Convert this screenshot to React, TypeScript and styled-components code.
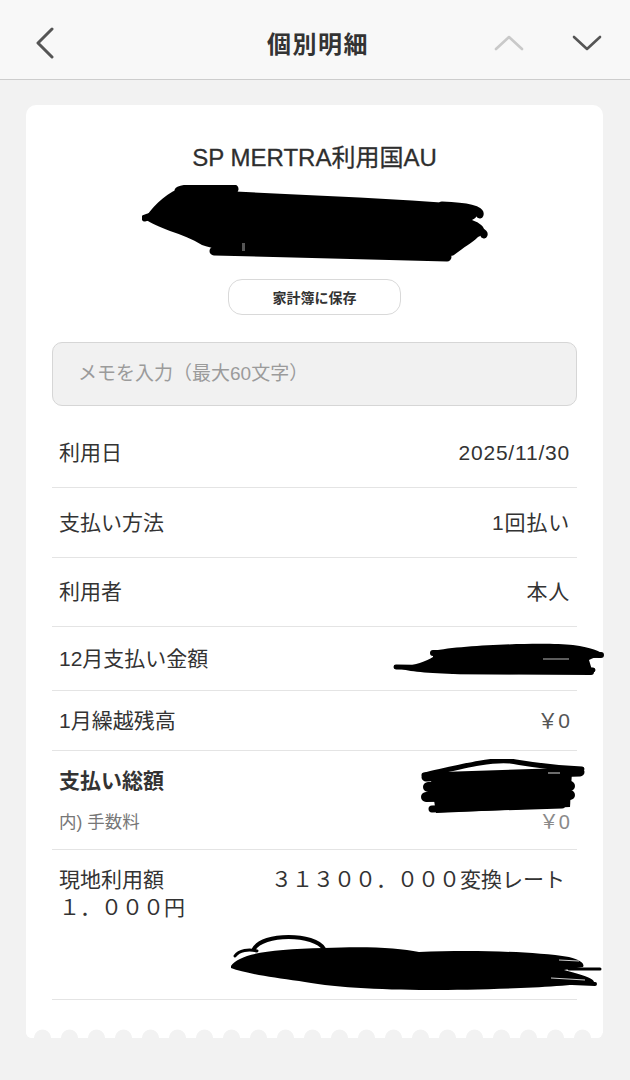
import styled, { createGlobalStyle } from 'styled-components'

const GlobalStyle = createGlobalStyle`
  html, body {
    margin: 0;
    padding: 0;
    background: #f2f2f2;
  }
  body {
    font-family: "Liberation Sans", "Noto Sans CJK JP", sans-serif;
    color: #333;
  }
  * {
    box-sizing: border-box;
  }
`

function Chevron({ dir, color }: { dir: 'left' | 'up' | 'down'; color: string }) {
  if (dir === 'left') {
    return (
      <svg width="22" height="32" viewBox="0 0 22 32">
        <polyline points="18,2 4,16 18,30" fill="none" stroke={color} strokeWidth="3" strokeLinecap="round" strokeLinejoin="round" />
      </svg>
    )
  }
  const pts = dir === 'up' ? '2,15 15,3 28,15' : '2,3 15,15 28,3'
  return (
    <svg width="30" height="18" viewBox="0 0 30 18">
      <polyline points={pts} fill="none" stroke={color} strokeWidth="2.6" strokeLinecap="round" strokeLinejoin="round" />
    </svg>
  )
}

// redaction marks drawn over the picture
function ScribbleName() {
  return (
    <svg width="346" height="82" viewBox="0 0 346 82">
      <g stroke="#000" strokeLinecap="round" fill="none">
        <path d="M37 6 C48 2 72 1 92 4" strokeWidth="9" />
        <path d="M3 33 C20 28 34 22 50 20" strokeWidth="7" />
        <path d="M300 20 C325 21 340 24 338 30" strokeWidth="7" />
        <path d="M290 44 C320 44 344 44 342 50" strokeWidth="7" />
        <path d="M72 66 L305 72" strokeWidth="9" />
      </g>
      <path
        d="M36 4 C120 8 230 12 320 19 C338 22 340 30 330 35 C344 40 346 48 336 52 C330 58 322 62 312 70 C300 76 200 72 120 68 C90 66 70 64 60 60 C50 54 40 50 28 46 C18 42 8 38 3 34 C8 24 22 10 36 4 Z"
        fill="#000"
      />
      <rect x="100" y="58" width="3" height="8" fill="#555" />
    </svg>
  )
}

function ScribbleDecember() {
  return (
    <svg width="211" height="34" viewBox="0 0 211 34">
      <g stroke="#000" strokeLinecap="round" fill="none">
        <path d="M40 10 L208 12" strokeWidth="6" />
        <path d="M3 24 L200 27" strokeWidth="5" />
        <path d="M60 28 L198 29" strokeWidth="6" />
      </g>
      <path
        d="M40 8 C70 2 150 -1 180 2 C200 5 210 9 209 12 C204 14 199 15 196 17 L199 27 C160 31 100 32 60 31 C30 30 12 28 6 25 C22 22 34 18 40 14 Z"
        fill="#000"
      />
      <path d="M150 16 L176 16" stroke="#fff" strokeWidth="1.2" opacity="0.6" />
    </svg>
  )
}

function ScribbleTotal() {
  return (
    <svg width="167" height="58" viewBox="0 0 167 58">
      <g stroke="#000" strokeLinecap="round" fill="none">
        <path d="M4 16 C40 8 70 0 90 2 C104 4 120 8 162 10" strokeWidth="5" />
        <path d="M6 18 L160 13" strokeWidth="9" />
        <path d="M8 28 L150 27" strokeWidth="10" />
        <path d="M6 38 L150 36" strokeWidth="10" />
        <path d="M12 50 L142 46" strokeWidth="7" />
      </g>
      <path d="M10 15 L152 12 L150 48 L16 54 Z" fill="#000" />
      <path d="M128 14 L140 14" stroke="#fff" strokeWidth="1.2" opacity="0.7" />
    </svg>
  )
}

function ScribbleLocal() {
  return (
    <svg width="373" height="58" viewBox="0 0 373 58">
      <g stroke="#000" strokeLinecap="round" fill="none">
        <path d="M25 15 C33 -1 86 -1 95 15" strokeWidth="4" />
        <path d="M6 22 C10 16 20 15 28 17" strokeWidth="3" />
        <path d="M340 35 L371 35" strokeWidth="3" />
        <path d="M320 48 L366 50" strokeWidth="4" />
      </g>
      <path
        d="M2 32 C10 20 40 15 95 14 C140 12 170 14 190 18 C240 16 300 17 340 23 C352 26 356 30 354 33 L335 36 C350 40 365 44 365 48 C330 54 250 56 200 56 C150 56 100 53 70 47 C40 43 15 39 2 34 Z"
        fill="#000"
      />
      <path d="M330 26 L350 27 M322 44 L356 46" stroke="#fff" strokeWidth="1.2" opacity="0.8" fill="none" />
    </svg>
  )
}

export default function App() {
  return (
    <>
      <GlobalStyle />
      <Header>
        <HeaderSide>
          <IconButton aria-label="戻る">
            <Chevron dir="left" color="#555" />
          </IconButton>
        </HeaderSide>
        <HeaderTitle>個別明細</HeaderTitle>
        <HeaderSide $end>
          <IconButton aria-label="前へ">
            <Chevron dir="up" color="#c9c9c9" />
          </IconButton>
          <IconButton aria-label="次へ">
            <Chevron dir="down" color="#555" />
          </IconButton>
        </HeaderSide>
      </Header>

      <Card>
        <CardHead>
          <ShopName>SP MERTRA利用国AU</ShopName>
          <Redacted>
            <ScribbleName />
          </Redacted>
          <SaveButton>家計簿に保存</SaveButton>
        </CardHead>

        <MemoInput placeholder="メモを入力（最大60文字）" />

        <DetailList>
          <Row $h={70}>
            <Label>利用日</Label>
            <Value>2025/11/30</Value>
          </Row>
          <Row $h={70}>
            <Label>支払い方法</Label>
            <Value>1回払い</Value>
          </Row>
          <Row $h={69}>
            <Label>利用者</Label>
            <Value>本人</Value>
          </Row>
          <Row $h={64}>
            <Label>12月支払い金額</Label>
            <RedactedValue>
              <ScribbleDecember />
            </RedactedValue>
          </Row>
          <Row $h={60}>
            <Label>1月繰越残高</Label>
            <Value $muted>￥0</Value>
          </Row>
          <TotalRow>
            <TotalLine>
              <Label $bold>支払い総額</Label>
            </TotalLine>
            <FeeLine>
              <SubLabel>内) 手数料</SubLabel>
              <SubValue>￥0</SubValue>
            </FeeLine>
            <TotalMark>
              <ScribbleTotal />
            </TotalMark>
          </TotalRow>
          <LocalRow>
            <LocalLine>
              <Label>現地利用額</Label>
              <Value $wide>３１３００．０００変換レート</Value>
            </LocalLine>
            <Label>１．０００円</Label>
            <LocalMark>
              <ScribbleLocal />
            </LocalMark>
          </LocalRow>
        </DetailList>

        <Scallop />
      </Card>
    </>
  )
}

const Header = styled.header`
  display: grid;
  grid-template-columns: 1fr auto 1fr;
  align-items: center;
  height: 80px;
  padding: 6px 28px 0 34px;
  background: #f8f8f8;
  border-bottom: 1px solid #cdcdcd;
`

const HeaderSide = styled.div<{ $end?: boolean }>`
  display: flex;
  align-items: center;
  justify-content: ${p => (p.$end ? 'flex-end' : 'flex-start')};
  gap: 48px;
`

const IconButton = styled.button`
  display: flex;
  align-items: center;
  justify-content: center;
  padding: 0;
  border: none;
  background: transparent;
  cursor: pointer;
`

const HeaderTitle = styled.h1`
  margin: 0;
  font-family: "Noto Sans CJK JP", sans-serif;
  font-size: 24px;
  font-weight: 700;
  color: #333;
  letter-spacing: 1.5px;
`

const Card = styled.main`
  display: flex;
  flex-direction: column;
  margin: 25px 27px 0 26px;
  padding: 38px 26px 0;
  background: #fff;
  border-radius: 10px 10px 6px 6px;
`

const CardHead = styled.div`
  display: flex;
  flex-direction: column;
  align-items: center;
`

const ShopName = styled.h2`
  margin: 0;
  font-size: 24px;
  line-height: 30px;
  font-weight: 400;
  color: #2e2e2e;
  -webkit-text-stroke: 0.3px #2e2e2e;
`

const Redacted = styled.div`
  display: flex;
  margin-top: 12px;
  height: 82px;
`

const SaveButton = styled.button`
  margin-top: 12px;
  width: 173px;
  height: 36px;
  border: 1px solid #d9d9d9;
  border-radius: 14px;
  background: #fff;
  font-family: "Noto Sans CJK JP", sans-serif;
  font-size: 14px;
  font-weight: 700;
  color: #333;
`

const MemoInput = styled.input`
  margin-top: 27px;
  height: 64px;
  padding: 0 25px;
  border: 1px solid #d6d6d6;
  border-radius: 10px;
  background: #f1f1f1;
  font-family: "Liberation Sans", "Noto Sans CJK JP", sans-serif;
  font-size: 19px;
  color: #333;
  outline: none;

  &::placeholder {
    color: #9b9b9b;
  }
`

const DetailList = styled.section`
  display: flex;
  flex-direction: column;
  margin-top: 12px;
`

const Row = styled.div<{ $h: number }>`
  display: flex;
  align-items: center;
  justify-content: space-between;
  height: ${p => p.$h}px;
  padding: 0 7px;
  border-bottom: 1px solid #e4e4e4;
`

const Label = styled.span<{ $bold?: boolean }>`
  font-size: 21px;
  line-height: 28px;
  font-weight: ${p => (p.$bold ? 700 : 400)};
  color: #333;
`

const Value = styled.span<{ $muted?: boolean; $wide?: boolean }>`
  font-size: 21px;
  line-height: 28px;
  color: ${p => (p.$muted ? '#555' : '#333')};
  letter-spacing: ${p => (p.$muted || p.$wide ? '0' : '0.8px')};
`

const RedactedValue = styled.div`
  display: flex;
  margin-right: -34px;
  margin-top: 3px;
`

const TotalRow = styled.div`
  position: relative;
  display: flex;
  flex-direction: column;
  padding: 16px 7px 14px;
  border-bottom: 1px solid #e4e4e4;
`

const TotalLine = styled.div`
  display: flex;
  align-items: center;
`

const FeeLine = styled.div`
  display: flex;
  align-items: center;
  justify-content: space-between;
  margin-top: 14px;
`

const SubLabel = styled.span`
  font-size: 17.5px;
  line-height: 26px;
  color: #777;
`

const SubValue = styled.span`
  font-size: 20px;
  line-height: 26px;
  color: #8a8a8a;
`

const TotalMark = styled.div`
  position: absolute;
  top: 8px;
  right: -10px;
  display: flex;
`

const LocalRow = styled.div`
  display: flex;
  flex-direction: column;
  padding: 16px 7px 7px;
  border-bottom: 1px solid #e4e4e4;
`

const LocalLine = styled.div`
  display: flex;
  align-items: center;
  justify-content: space-between;
  padding-right: 5px;
`

const LocalMark = styled.div`
  display: flex;
  align-self: flex-end;
  margin: 12px -32px 0 0;
`

const Scallop = styled.div`
  height: 10px;
  margin: 28px -26px 0;
  background-image: radial-gradient(circle at 50% 100%, #f2f2f2 8px, #fff 8.8px);
  background-size: 27px 10px;
  background-position: 3px 0;
  background-repeat: repeat-x;
  border-radius: 0 0 6px 6px;
`
